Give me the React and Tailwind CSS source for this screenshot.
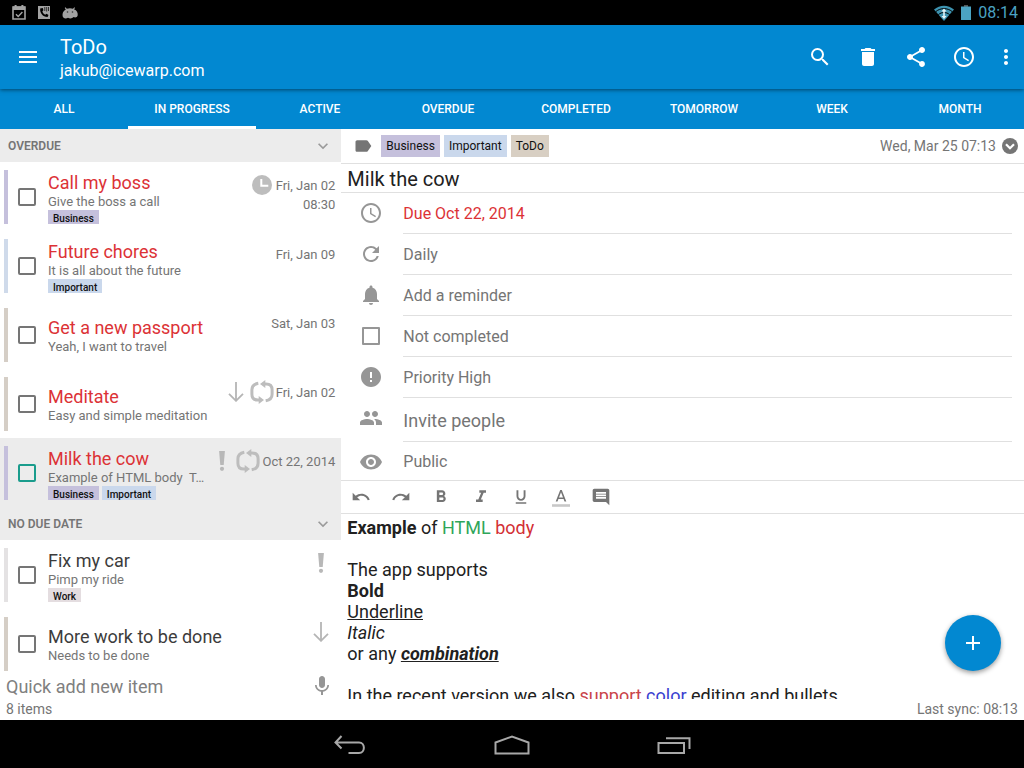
import React from "react";
import {
  MdMenu, MdSearch, MdDelete, MdShare, MdAccessTime, MdMoreVert, MdLabel, MdRefresh,
  MdNotifications, MdError, MdPeople, MdVisibility, MdUndo, MdRedo, MdFormatBold,
  MdFormatItalic, MdFormatUnderlined, MdComment, MdMic, MdAdd, MdExpandMore,
} from "react-icons/md";

const TAG_COLORS = {
  Business: "bg-[#c5c0dc]",
  Important: "bg-[#cad8ec]",
  ToDo: "bg-[#d8cfc3]",
  Work: "bg-[#e4dde0]",
};

const TABS = ["All", "In progress", "Active", "Overdue", "Completed", "Tomorrow", "Week", "Month"];

const OVERDUE = [
  { id: "boss", title: "Call my boss", note: "Give the boss a call", tags: ["Business"], bar: "bg-[#c5c0dc]", icons: ["clock"], date: "Fri, Jan 02", time: "08:30" },
  { id: "chores", title: "Future chores", note: "It is all about the future", tags: ["Important"], bar: "bg-[#cfdaea]", icons: [], date: "Fri, Jan 09" },
  { id: "passport", title: "Get a new passport", note: "Yeah, I want to travel", tags: [], bar: "bg-[#d5cec6]", icons: [], date: "Sat, Jan 03" },
  { id: "meditate", title: "Meditate", note: "Easy and simple meditation", tags: [], bar: "bg-[#d5cec6]", icons: ["low", "repeat"], date: "Fri, Jan 02" },
  { id: "cow", title: "Milk the cow", note: "Example of HTML body \u00a0T…", tags: ["Business", "Important"], bar: "bg-[#c5c0dc]", icons: ["high", "repeat"], date: "Oct 22, 2014", selected: true },
];

const NO_DUE = [
  { id: "car", title: "Fix my car", note: "Pimp my ride", tags: ["Work"], bar: "bg-[#e4e2e3]", icons: ["high"] },
  { id: "work", title: "More work to be done", note: "Needs to be done", tags: [], bar: "bg-[#d5cec6]", icons: ["low"] },
];

function RowIcon({ kind }) {
  if (kind === "clock") {
    return (
      <svg viewBox="0 0 20 20" className="mr-1 size-5" aria-hidden="true">
        <circle cx="10" cy="10" r="10" fill="#bdbdbd" />
        <path d="M9.3 4v6.8h7" fill="none" stroke="#fff" strokeWidth="2" />
      </svg>
    );
  }
  if (kind === "repeat") {
    return (
      <svg viewBox="0 0 24 24" className="mr-0.5 size-6" fill="none" stroke="#bdbdbd" strokeWidth="3" aria-hidden="true">
        <path d="M8.300 3.200C4 4 1.900 6.200 1.900 9.800v4.400c0 3.700 2 5.900 6 5.900h1.300" />
        <path d="M15.700 20.800c4.300-.8 6.400-3 6.400-6.600V9.800c0-3.700-2-5.900-6-5.900h-1.300" />
        <path d="M8.700 15.900l5.300 4.200-5.300 3.900zM15.300 0L10 3.900l5.300 4.200z" fill="#bdbdbd" stroke="none" />
      </svg>
    );
  }
  if (kind === "low") {
    return (
      <svg viewBox="0 0 16 20" className="mx-1.5 h-5 w-4" fill="none" stroke="#b5b5b5" strokeWidth="1.8" aria-hidden="true">
        <path d="M8 0v18.5M1 11.8l7 7 7-7" />
      </svg>
    );
  }
  return (
    <svg viewBox="0 0 16 20" className="mx-1.5 h-5 w-4" fill="#b8b8b8" aria-hidden="true">
      <path d="M5.1 0h5.8L9.7 14H6.3z" />
      <circle cx="8" cy="17.8" r="2.1" />
    </svg>
  );
}

function Task({ task, overdue }) {
  return (
    <li className={`flex h-[69px] shrink-0 items-start pt-2 pr-1.5 pl-1 ${task.selected ? "bg-[#ececec]" : ""}`}>
      <span className={`h-[54px] w-1 shrink-0 ${task.bar}`} />
      <span className="flex h-[54px] w-10 shrink-0 items-center pl-2.5">
        <input
          type="checkbox"
          id={`task-${task.id}`}
          className={`size-[18px] appearance-none rounded-[2px] border-2 ${task.selected ? "border-[#1a9c8c]" : "border-[#757575]"}`}
        />
      </span>
      <div className="flex h-[54px] min-w-0 flex-1 flex-col justify-center">
        <label htmlFor={`task-${task.id}`} className={`h-6 truncate text-[18px] leading-[26px] ${overdue ? "text-[#dc3236]" : "text-[#3c3c3c]"}`}>
          {task.title}
        </label>
        <p className="truncate text-[13px] leading-4 text-[#757575]">{task.note}</p>
        {task.tags.length > 0 && (
          <div className="flex h-[14px] gap-[3px] overflow-hidden">
            {task.tags.map((t) => (
              <span key={t} className={`px-[5px] text-[10px] leading-[18px] font-medium text-[#111] ${TAG_COLORS[t]}`}>{t}</span>
            ))}
          </div>
        )}
      </div>
      <div className="flex shrink-0 items-start">
        <div className="flex h-[30px] items-center">
          {task.icons.map((k) => <RowIcon key={k} kind={k} />)}
        </div>
        {task.date && (
          <div className="pt-1.5 text-right text-[13px] leading-[19px] text-[#757575]">
            <p>{task.date}</p>
            {task.time && <p>{task.time}</p>}
          </div>
        )}
      </div>
    </li>
  );
}

function SectionHeader({ children }) {
  return (
    <button type="button" className="flex h-[33px] w-full shrink-0 items-center justify-between bg-[#ececec] pr-2 pl-2 text-[12px] font-semibold text-[#757575]">
      {children}
      <MdExpandMore className="size-5 text-[#9a9a9a]" />
    </button>
  );
}

function Field({ icon, children, tall, last, tone = "text-[#757575]" }) {
  const box = tall
    ? "h-11 border-b border-[#e0e0e0] pt-0.5 text-[18px]"
    : last
      ? "h-[38px] pt-0.5 text-[16px]"
      : "h-[41px] border-b border-[#e0e0e0] pt-0.5 text-[16px]";
  return (
    <div className="flex">
      <span className={`flex w-[62px] shrink-0 items-center justify-center pr-0.5 text-[#969696] ${tall ? "pb-1" : last ? "pt-0.5" : "pb-0.5"}`}>{icon}</span>
      <button type="button" className={`mr-3 flex-1 text-left ${box} ${tone}`}>
        {children}
      </button>
    </div>
  );
}

function StatusBar() {
  return (
    <div className="flex h-[25px] shrink-0 items-center justify-between bg-black px-1.5 text-[#4ba3c3]">
      <div className="flex items-center gap-3 pl-1.5">
        <svg viewBox="0 0 14 15" className="h-[15px] w-[14px]" aria-hidden="true">
          <path d="M1 2h12v12H1z" fill="none" stroke="#a3a3a3" strokeWidth="1.6" />
          <path d="M1 1.6h12v3.4H1zM2.6 0h2v2h-2zM9.4 0h2v2h-2z" fill="#a3a3a3" />
          <path d="M4 9.2l2.2 2.2L10.4 7" fill="none" stroke="#a3a3a3" strokeWidth="1.4" />
        </svg>
        <svg viewBox="0 0 12 13" className="h-[13px] w-3" aria-hidden="true">
          <path d="M0 0h12v13H0z" fill="#a3a3a3" />
          <path d="M2.200 2.500C1.800 7 4.500 10.800 9.600 11l.9-1.900-2-1.300-1.300.9C5.600 8 4.600 6.700 4.400 5.200l1-.9-.6-2.300z" fill="#000" />
          <path d="M6.800 1v4M8.700 1v4.500M10.500 1v4" stroke="#222" strokeWidth=".9" />
        </svg>
        <svg viewBox="0 0 16 12" className="h-3 w-4" fill="#a3a3a3" aria-hidden="true">
          <path d="M3.500.3l1.300 1.500C6.800 1.100 9.200 1.100 11 1.800L12.300.3l.8.7-1.200 1.300C15 3.500 16 6 15.700 8.200c-.4 2.300-2.600 2.600-4 1.900-1.600 1.500-3.800 1.700-5.700.7C3.500 12 1 11.300.6 9 .2 6.200 1.200 3.600 3.800 2.400L2.700 1z" />
          <circle cx="5.500" cy="5" r=".8" fill="#333" />
          <circle cx="10.500" cy="5" r=".8" fill="#333" />
        </svg>
      </div>
      <div className="flex items-center gap-[7px]">
        <svg viewBox="0 0 20 16" className="h-4 w-5" aria-hidden="true">
          <path d="M0 4.500C5.800-.6 14.200-.6 20 4.500L10 16z" fill="#3d93b0" />
          <path d="M1.800 6.600c4.800-4 11.600-4 16.400 0M4.400 9.600c3.400-2.800 7.800-2.800 11.200 0" fill="none" stroke="#000" strokeWidth="1" />
          <path d="M10 3.500l2.600 3H10.800v4.500h1.800L10 14l-2.600-3h1.800V6.500H7.400z" fill="#e4f5f9" />
        </svg>
        <svg viewBox="0 0 10 15" className="h-[15px] w-2.5" aria-hidden="true">
          <path d="M3 0h4v2H3z" fill="#555" />
          <path d="M0 1.500h10V15H0z" fill="#4ba3c3" />
        </svg>
        <span className="text-[16px] leading-none">08:14</span>
      </div>
    </div>
  );
}

function AppBar() {
  const action = "flex size-12 items-center justify-center";
  return (
    <header className="z-10 flex h-16 shrink-0 items-center bg-[#0288d1] pl-4 text-white shadow-[0_1px_4px_rgba(0,0,0,0.5)]">
      <button type="button" aria-label="Menu"><MdMenu className="size-6" /></button>
      <div className="min-w-0 flex-1 pt-1 pl-5">
        <h1 className="text-[20px] leading-6">ToDo</h1>
        <p className="text-[16px] leading-6">jakub@icewarp.com</p>
      </div>
      <button type="button" aria-label="Search" className={action}><MdSearch className="size-6" /></button>
      <button type="button" aria-label="Delete" className={action}><MdDelete className="size-6" /></button>
      <button type="button" aria-label="Share" className={action}><MdShare className="size-6" /></button>
      <button type="button" aria-label="Snooze" className={action}><MdAccessTime className="size-6" /></button>
      <button type="button" aria-label="More" className="flex h-12 w-9 items-center justify-center"><MdMoreVert className="size-6" /></button>
    </header>
  );
}

function Toolbar() {
  const item = "flex size-10 items-center justify-center";
  return (
    <div className="flex h-[33px] shrink-0 items-center border-b border-[#e0e0e0] text-[#757575]">
      <button type="button" aria-label="Undo" className={item}><MdUndo className="size-5" /></button>
      <button type="button" aria-label="Redo" className={item}><MdRedo className="size-5" /></button>
      <button type="button" aria-label="Bold" className={item}><MdFormatBold className="size-5" /></button>
      <button type="button" aria-label="Italic" className={item}><MdFormatItalic className="size-5" /></button>
      <button type="button" aria-label="Underline" className={item}><MdFormatUnderlined className="size-[18px]" /></button>
      <button type="button" aria-label="Text color" className={item}>
        <svg viewBox="0 0 20 20" className="size-5" aria-hidden="true">
          <path d="M1 17.200h18v2.600H1z" fill="#c8c8c8" />
          <path d="M9.200 3L4.700 14.500h1.800l.9-2.500h5.200l.9 2.500h1.800L10.800 3H9.200zM8 10.500L10 5.200l2 5.300H8z" fill="#757575" />
        </svg>
      </button>
      <button type="button" aria-label="Comment" className={item}><MdComment className="size-5" /></button>
    </div>
  );
}

function Detail() {
  return (
    <section className="relative flex min-h-0 min-w-0 flex-col bg-white">
      <div className="flex h-[35px] shrink-0 items-center border-b border-[#e0e0e0] pr-1.5 pl-3">
        <MdLabel className="mr-2 size-5 text-[#757575]" />
        <div className="flex flex-1 gap-1">
          {["Business", "Important", "ToDo"].map((t) => (
            <span key={t} className={`px-[5px] text-[12px] leading-[22px] text-[#111] ${TAG_COLORS[t]}`}>{t}</span>
          ))}
        </div>
        <span className="text-[14px] text-[#757575]">Wed, Mar 25 07:13</span>
        <button type="button" aria-label="Show details" className="ml-1.5">
          <svg viewBox="0 0 16 16" className="size-4" aria-hidden="true">
            <circle cx="8" cy="8" r="8" fill="#757575" />
            <path d="M4 6.300l4 4 4-4" fill="none" stroke="#fff" strokeWidth="2.200" />
          </svg>
        </button>
      </div>
      <input
        aria-label="Title"
        defaultValue="Milk the cow"
        className="h-[29px] w-full shrink-0 border-b border-[#e0e0e0] pt-0.5 pl-1.5 text-[20px] text-[#212121] outline-none"
      />
      <div className="shrink-0 border-b border-[#e0e0e0]">
        <Field icon={<MdAccessTime className="size-6" />} tone="text-[#dc3236]">Due Oct 22, 2014</Field>
        <Field icon={<MdRefresh className="size-6" />}>Daily</Field>
        <Field icon={<MdNotifications className="size-6" />}>Add a reminder</Field>
        <div className="flex">
          <span className="flex w-[62px] shrink-0 items-center justify-center pr-0.5 pb-0.5">
            <input id="completed" type="checkbox" className="size-[18px] appearance-none rounded-[1px] border-2 border-[#969696]" />
          </span>
          <label htmlFor="completed" className="mr-3 flex h-[41px] flex-1 items-center border-b border-[#e0e0e0] pt-0.5 text-[16px] text-[#757575]">
            Not completed
          </label>
        </div>
        <Field icon={<MdError className="size-6" />}>Priority High</Field>
        <Field icon={<MdPeople className="size-6" />} tall>Invite people</Field>
        <Field icon={<MdVisibility className="size-6" />} last>Public</Field>
      </div>
      <Toolbar />
      <div className="min-h-0 flex-1 overflow-hidden pt-[3px] pl-1.5 text-[18px] leading-[21px] text-[#212121]">
        <p><b>Example</b> of <span className="text-[#2fa65a]">HTML</span> <span className="text-[#d32f35]">body</span></p>
        <br />
        <p>The app supports</p>
        <p className="font-bold">Bold</p>
        <p className="underline">Underline</p>
        <p className="italic">Italic</p>
        <p>or any <b className="italic underline">combination</b></p>
        <br />
        <p>In the recent version we also <span className="text-[#c9444a]">support</span> <span className="text-[#3a3fd0]">color</span> editing and bullets</p>
      </div>
      <button
        type="button"
        aria-label="Add item"
        className="absolute right-[23px] bottom-7 flex size-14 items-center justify-center rounded-full bg-[#0288d1] text-white shadow-[0_2px_5px_rgba(0,0,0,0.4)]"
      >
        <MdAdd className="size-6" />
      </button>
    </section>
  );
}

function NavBar() {
  return (
    <nav className="flex h-12 shrink-0 items-center justify-center gap-[126px] bg-black pt-0.5 text-[#a8a8a8]">
      <button type="button" aria-label="Back">
        <svg viewBox="0 0 36 20" className="h-5 w-9" fill="none" stroke="currentColor" strokeWidth="2" aria-hidden="true">
          <path d="M9.500 1L3.500 7.500l6 6M4 7.500h23c6.500 0 6.500 10.500 0 10.500H16.500" />
        </svg>
      </button>
      <button type="button" aria-label="Home">
        <svg viewBox="0 0 36 20" className="h-5 w-9" fill="none" stroke="currentColor" strokeWidth="2" aria-hidden="true">
          <path d="M1.500 18.500V7.500L18 1.500l16.500 6v11z" />
        </svg>
      </button>
      <button type="button" aria-label="Recent apps">
        <svg viewBox="0 0 36 20" className="h-5 w-9" fill="none" stroke="currentColor" strokeWidth="2" aria-hidden="true">
          <path d="M2.500 8H28v10H2.500zM10 3.200h23.500V14" />
        </svg>
      </button>
    </nav>
  );
}

export default function App() {
  return (
    <div className="flex h-screen flex-col overflow-hidden bg-white font-['Roboto',sans-serif]">
      <StatusBar />
      <AppBar />
      <nav className="flex h-10 shrink-0 bg-[#0288d1]">
        {TABS.map((t) => (
          <a
            key={t}
            href="#"
            className={`flex flex-1 items-center justify-center border-b-3 pt-0.5 text-[12px] font-medium text-white uppercase ${t === "In progress" ? "border-white" : "border-[#0288d1]"}`}
          >
            {t}
          </a>
        ))}
      </nav>
      <main className="grid min-h-0 flex-1 grid-cols-[1fr_2fr] grid-rows-[minmax(0,1fr)]">
        <section className="flex min-h-0 min-w-0 flex-col">
          <div className="flex min-h-0 flex-1 flex-col overflow-hidden">
            <SectionHeader>OVERDUE</SectionHeader>
            <ul>{OVERDUE.map((t) => <Task key={t.id} task={t} overdue />)}</ul>
            <SectionHeader>NO DUE DATE</SectionHeader>
            <ul>{NO_DUE.map((t) => <Task key={t.id} task={t} />)}</ul>
          </div>
          <div className="flex h-[27px] shrink-0 items-center pr-[7px] pl-1.5">
            <input
              aria-label="Quick add new item"
              placeholder="Quick add new item"
              className="min-w-0 flex-1 pt-0.5 text-[18px] outline-none placeholder:text-[#808080]"
            />
            <button type="button" aria-label="Dictate"><MdMic className="size-6 text-[#969696]" /></button>
          </div>
        </section>
        <Detail />
      </main>
      <footer className="flex h-[21px] shrink-0 items-center justify-between px-1.5 text-[14px] text-[#757575]">
        <span>8 items</span>
        <span>Last sync: 08:13</span>
      </footer>
      <NavBar />
    </div>
  );
}
